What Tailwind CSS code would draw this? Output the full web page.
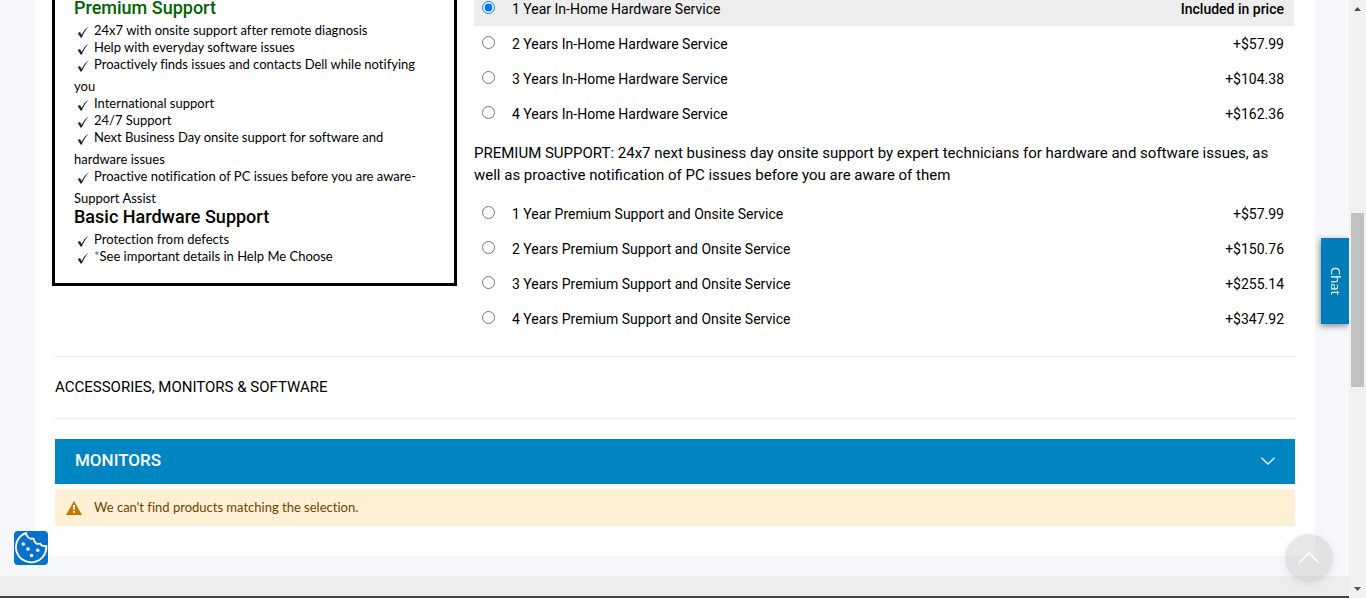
<!DOCTYPE html>
<html lang="en">
<head>
<meta charset="utf-8">
<title>Configure support options</title>
<script src="https://cdn.jsdelivr.net/npm/@tailwindcss/browser@4"></script>
</head>
<body class="h-screen overflow-hidden bg-[#f5f7fa] font-['Roboto',sans-serif] text-black">
<svg class="hidden"><symbol id="check" viewBox="0 0 12 12"><path d="M.8 7 3 6l1.600 3C6 6 8.500 2.500 11.500.8 9 3.500 6.500 7.500 4.800 11.500H3.500Z" fill="#222"/></symbol></svg>
<div class="flex h-full">
  <div class="flex min-w-0 flex-1 flex-col">
    <main class="mr-[34px] ml-[35px] bg-white px-5 pb-[30px]">
      <div class="flex items-start">
        <aside class="-ml-[3px] w-[405px] shrink-0 border-x-3 border-b-3 border-black px-[19px] pb-[18px] font-['Lato',sans-serif] text-[13px] leading-[17px] [font-variant-ligatures:none]">
          <h2 class="h-[22px] font-['Roboto',sans-serif] text-lg leading-4 font-medium text-[#006400]">Premium Support</h2>
          <ul>
            <li><svg class="mr-[5px] ml-[3px] inline size-3"><use href="#check"/></svg>24x7 with onsite support after remote diagnosis</li>
            <li><svg class="mr-[5px] ml-[3px] inline size-3"><use href="#check"/></svg>Help with everyday software issues</li>
            <li><svg class="mr-[5px] ml-[3px] inline size-3"><use href="#check"/></svg>Proactively finds issues and contacts Dell while notifying <span class="block pt-1 leading-[18px]">you</span></li>
            <li><svg class="mr-[5px] ml-[3px] inline size-3"><use href="#check"/></svg>International support</li>
            <li><svg class="mr-[5px] ml-[3px] inline size-3"><use href="#check"/></svg>24/7 Support</li>
            <li><svg class="mr-[5px] ml-[3px] inline size-3"><use href="#check"/></svg>Next Business Day onsite support for software and <span class="block pt-1 leading-[18px]">hardware issues</span></li>
            <li><svg class="mr-[5px] ml-[3px] inline size-3"><use href="#check"/></svg>Proactive notification of PC issues before you are aware- <span class="block pt-1 leading-[18px]">Support Assist</span></li>
          </ul>
          <h2 class="h-6 font-['Roboto',sans-serif] text-lg leading-5 font-medium">Basic Hardware Support</h2>
          <ul>
            <li><svg class="mr-[5px] ml-[3px] inline size-3"><use href="#check"/></svg>Protection from defects</li>
            <li><svg class="mr-[5px] ml-[3px] inline size-3"><use href="#check"/></svg><a href="#" class="text-[#4a6fa5]">*</a>See important details in Help Me Choose</li>
          </ul>
        </aside>
        <section class="ml-[17px] flex-1 text-sm">
          <div class="-mt-[9px] mr-px">
            <label class="flex h-[35px] items-center bg-[#ededed] px-2"><input type="radio" name="s" checked class="mr-[17px] mb-[2px] size-[13px]"><span class="flex-1">1 Year In-Home Hardware Service</span><span class="mr-[2px] font-medium">Included in price</span></label>
            <label class="flex h-[35px] items-center px-2"><input type="radio" name="s" class="mr-[17px] mb-[2px] size-[13px]"><span class="flex-1">2 Years In-Home Hardware Service</span><span class="mr-[2px]">+$57.99</span></label>
            <label class="flex h-[35px] items-center px-2"><input type="radio" name="s" class="mr-[17px] mb-[2px] size-[13px]"><span class="flex-1">3 Years In-Home Hardware Service</span><span class="mr-[2px]">+$104.38</span></label>
            <label class="flex h-[35px] items-center px-2"><input type="radio" name="s" class="mr-[17px] mb-[2px] size-[13px]"><span class="flex-1">4 Years In-Home Hardware Service</span><span class="mr-[2px]">+$162.36</span></label>
          </div>
          <p class="mt-[11px] mb-[10px] pr-3 text-[15px] leading-[22px]">PREMIUM SUPPORT: 24x7 next business day onsite support by expert technicians for hardware and software issues, as well as proactive notification of PC issues before you are aware of them</p>
          <div class="mr-px">
            <label class="flex h-[35px] items-center px-2"><input type="radio" name="s" class="mr-[17px] mb-[2px] size-[13px]"><span class="flex-1">1 Year Premium Support and Onsite Service</span><span class="mr-[2px]">+$57.99</span></label>
            <label class="flex h-[35px] items-center px-2"><input type="radio" name="s" class="mr-[17px] mb-[2px] size-[13px]"><span class="flex-1">2 Years Premium Support and Onsite Service</span><span class="mr-[2px]">+$150.76</span></label>
            <label class="flex h-[35px] items-center px-2"><input type="radio" name="s" class="mr-[17px] mb-[2px] size-[13px]"><span class="flex-1">3 Years Premium Support and Onsite Service</span><span class="mr-[2px]">+$255.14</span></label>
            <label class="flex h-[35px] items-center px-2"><input type="radio" name="s" class="mr-[17px] mb-[2px] size-[13px]"><span class="flex-1">4 Years Premium Support and Onsite Service</span><span class="mr-[2px]">+$347.92</span></label>
          </div>
        </section>
      </div>
      <h2 class="mt-5 border-y border-[#ebebeb] py-5 text-[15px] leading-[21px]">ACCESSORIES, MONITORS &amp; SOFTWARE</h2>
      <button type="button" class="mt-5 flex h-[45px] w-full items-center justify-between bg-[#0085c3] px-5 pb-[2px] text-[17px] font-medium text-white">MONITORS
        <svg class="h-2 w-[14px]" viewBox="0 0 14 8" fill="none" stroke="#fff" stroke-width="1.300"><path d="M.5.7 7 7 13.500.7"/></svg>
      </button>
      <div role="status" class="mt-[5px] flex h-[37px] items-center bg-[#fdf0d5] pl-[11px] font-['Lato',sans-serif] text-[13px] text-[#6f4400] [font-variant-ligatures:none]">
        <svg class="mr-3 h-[14px] w-4" viewBox="0 0 16 14"><path d="M8 0 16 14H0Z" fill="#c07600"/><path d="M7 4h2l-.3 5H7.300ZM7.100 10h1.800v1.800H7.100Z" fill="#fff"/></svg>
        We can't find products matching the selection.
      </div>
    </main>
    <footer class="mt-5 h-[22px] border-b-2 border-[#444] bg-[#ededed]"></footer>
  </div>
  <div class="flex w-[17px] shrink-0 flex-col items-center bg-[#f1f1f1]" aria-hidden="true">
    <svg class="mt-[7px] h-1 w-[7px]" viewBox="0 0 7 4"><path d="M0 4 3.500 0 7 4Z" fill="#505050"/></svg>
    <div class="mt-[202px] h-[174px] w-[13px] bg-[#c1c1c1]"></div>
    <svg class="mt-auto mb-[7px] h-1 w-[7px]" viewBox="0 0 7 4"><path d="M0 0H7L3.500 4Z" fill="#505050"/></svg>
  </div>
</div>
<button type="button" class="fixed top-[238px] right-[17px] flex h-[86px] w-7 items-center justify-center bg-[#007db8] font-['Open_Sans',sans-serif] text-[13px] text-white shadow-[-1px_2px_6px_rgba(0,0,0,0.45)] [clip-path:inset(-10px_0_-10px_-10px)] [writing-mode:vertical-rl]">Chat</button>
<button type="button" aria-label="Cookie settings" class="fixed bottom-[33px] left-[14px] size-[34px] rounded bg-[#0672cb]">
  <svg viewBox="0 0 34 34" fill="none"><path d="M12 1.800A15.200 15.200 0 1 0 32.300 15C29 15.500 27 14.500 26.200 12.500 23.500 13.700 20.200 12 19.500 7.500 15.500 8.500 12.300 6 12 1.800Z" stroke="#fff" stroke-width="1.800" stroke-linejoin="round"/><g fill="#fff"><circle cx="9.300" cy="13" r="1.800"/><circle cx="14" cy="18" r="1.800"/><circle cx="23.700" cy="19.300" r="1.800"/><circle cx="17.500" cy="24.500" r="1.800"/></g></svg>
</button>
<button type="button" aria-label="Back to top" class="fixed right-[33px] bottom-4 flex size-12 items-center justify-center rounded-full bg-[#bbbbbb]/35 shadow-[0_2px_8px_rgba(0,0,0,0.08)]">
  <svg class="h-3 w-[22px]" viewBox="0 0 22 12" fill="none" stroke="#fff" stroke-width="1.600"><path d="M1 11 11 1 21 11"/></svg>
</button>
</body>
</html>
